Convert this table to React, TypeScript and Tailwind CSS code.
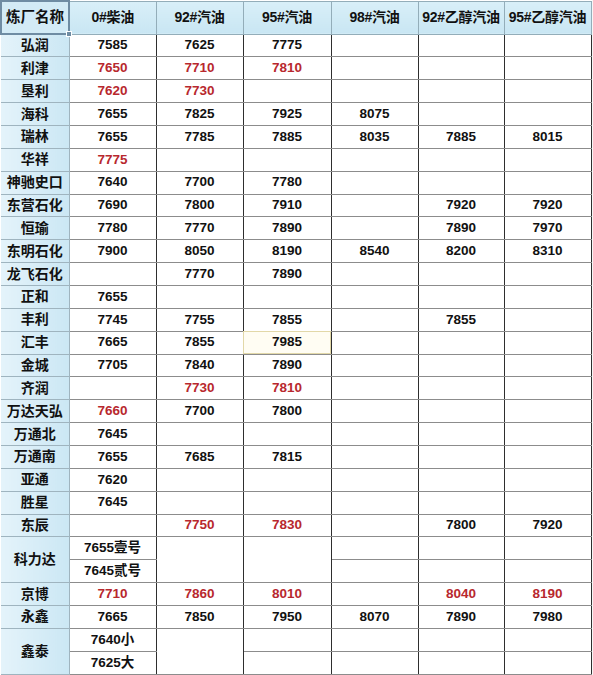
import React from "react";

type Cell = string | { v: string; red?: boolean; hl?: boolean };

const R = (v: string): Cell => ({ v, red: true });

const headers = ["0#柴油", "92#汽油", "95#汽油", "98#汽油", "92#乙醇汽油", "95#乙醇汽油"];

const rows: { name: string; cells: Cell[] }[] = [
  { name: "弘润", cells: ["7585", "7625", "7775", "", "", ""] },
  { name: "利津", cells: [R("7650"), R("7710"), R("7810"), "", "", ""] },
  { name: "垦利", cells: [R("7620"), R("7730"), "", "", "", ""] },
  { name: "海科", cells: ["7655", "7825", "7925", "8075", "", ""] },
  { name: "瑞林", cells: ["7655", "7785", "7885", "8035", "7885", "8015"] },
  { name: "华祥", cells: [R("7775"), "", "", "", "", ""] },
  { name: "神驰史口", cells: ["7640", "7700", "7780", "", "", ""] },
  { name: "东营石化", cells: ["7690", "7800", "7910", "", "7920", "7920"] },
  { name: "恒瑜", cells: ["7780", "7770", "7890", "", "7890", "7970"] },
  { name: "东明石化", cells: ["7900", "8050", "8190", "8540", "8200", "8310"] },
  { name: "龙飞石化", cells: ["", "7770", "7890", "", "", ""] },
  { name: "正和", cells: ["7655", "", "", "", "", ""] },
  { name: "丰利", cells: ["7745", "7755", "7855", "", "7855", ""] },
  { name: "汇丰", cells: ["7665", "7855", { v: "7985", hl: true }, "", "", ""] },
  { name: "金城", cells: ["7705", "7840", "7890", "", "", ""] },
  { name: "齐润", cells: ["", R("7730"), R("7810"), "", "", ""] },
  { name: "万达天弘", cells: [R("7660"), "7700", "7800", "", "", ""] },
  { name: "万通北", cells: ["7645", "", "", "", "", ""] },
  { name: "万通南", cells: ["7655", "7685", "7815", "", "", ""] },
  { name: "亚通", cells: ["7620", "", "", "", "", ""] },
  { name: "胜星", cells: ["7645", "", "", "", "", ""] },
  { name: "东辰", cells: ["", R("7750"), R("7830"), "", "7800", "7920"] },
];

const tail: { name: string; cells: Cell[] }[] = [
  { name: "京博", cells: [R("7710"), R("7860"), R("8010"), "", R("8040"), R("8190")] },
  { name: "永鑫", cells: ["7665", "7850", "7950", "8070", "7890", "7980"] },
];

const rowH = "h-[22.86px]";
const nameCls =
  "bg-gradient-to-r from-[#e4f3fa] to-[#cbe7f4] border-y border-y-[#9fb4bf] border-r border-r-[#9fb4bf] text-center text-[14px] font-bold text-[#111] p-0";
const dataCls = "border-y border-y-[#8c8c8c] border-x border-x-[#2e2e2e] text-center text-[13.5px] font-bold p-0";

function DataCell({ c, rowSpan }: { c: Cell; rowSpan?: number }) {
  const v = typeof c === "string" ? c : c.v;
  const red = typeof c !== "string" && c.red;
  const hl = typeof c !== "string" && c.hl;
  return (
    <td rowSpan={rowSpan} className={`${dataCls} ${hl ? "bg-[#fffdf3] outline outline-1 outline-[#e2d8a8] -outline-offset-1" : "bg-white"}`}>
      <span className={red ? "text-[#b8282e]" : "text-[#111]"}>{v}</span>
    </td>
  );
}

export default function App() {
  return (
    <div className="w-[593px] h-[675px] bg-[#f6f6f6] overflow-hidden font-['Liberation_Sans','Noto_Sans_CJK_SC',sans-serif]">
      <table className="table-fixed border-collapse w-[590px] bg-white">
        <colgroup>
          <col className="w-[68px]" />
          <col className="w-[87px]" />
          <col className="w-[87px]" />
          <col className="w-[88px]" />
          <col className="w-[87px]" />
          <col className="w-[86px]" />
          <col className="w-[87px]" />
        </colgroup>
        <thead>
          <tr className="h-[33px]">
            <th className="relative bg-[#d3ebf6] border-2 border-[#6f8ca3] text-[14.5px] font-bold text-[#111] p-0">
              炼厂名称
              <span className="absolute -right-[4px] -bottom-[4px] w-[6px] h-[6px] bg-[#6f8ca3] border border-white" />
            </th>
            {headers.map((h) => (
              <th
                key={h}
                className="bg-gradient-to-b from-[#d9eff8] to-[#c9e6f3] border border-[#93adb9] text-[14px] font-bold text-[#111] p-0 whitespace-nowrap tracking-[-0.3px]"
              >
                {h}
              </th>
            ))}
          </tr>
        </thead>
        <tbody>
          {rows.map((r) => (
            <tr key={r.name} className={rowH}>
              <td className={nameCls}>{r.name}</td>
              {r.cells.map((c, i) => (
                <DataCell key={i} c={c} />
              ))}
            </tr>
          ))}
          <tr className={rowH}>
            <td rowSpan={2} className={nameCls}>科力达</td>
            <DataCell c="7655壹号" />
            <DataCell c="" rowSpan={2} />
            <DataCell c="" rowSpan={2} />
            <DataCell c="" />
            <DataCell c="" />
            <DataCell c="" />
          </tr>
          <tr className={rowH}>
            <DataCell c="7645贰号" />
            <DataCell c="" />
            <DataCell c="" />
            <DataCell c="" />
          </tr>
          {tail.map((r) => (
            <tr key={r.name} className={rowH}>
              <td className={nameCls}>{r.name}</td>
              {r.cells.map((c, i) => (
                <DataCell key={i} c={c} />
              ))}
            </tr>
          ))}
          <tr className={rowH}>
            <td rowSpan={2} className={nameCls}>鑫泰</td>
            <DataCell c="7640小" />
            <DataCell c="" rowSpan={2} />
            <DataCell c="" />
            <DataCell c="" />
            <DataCell c="" />
            <DataCell c="" />
          </tr>
          <tr className={rowH}>
            <DataCell c="7625大" />
            <DataCell c="" />
            <DataCell c="" />
            <DataCell c="" />
            <DataCell c="" />
          </tr>
        </tbody>
      </table>
    </div>
  );
}
